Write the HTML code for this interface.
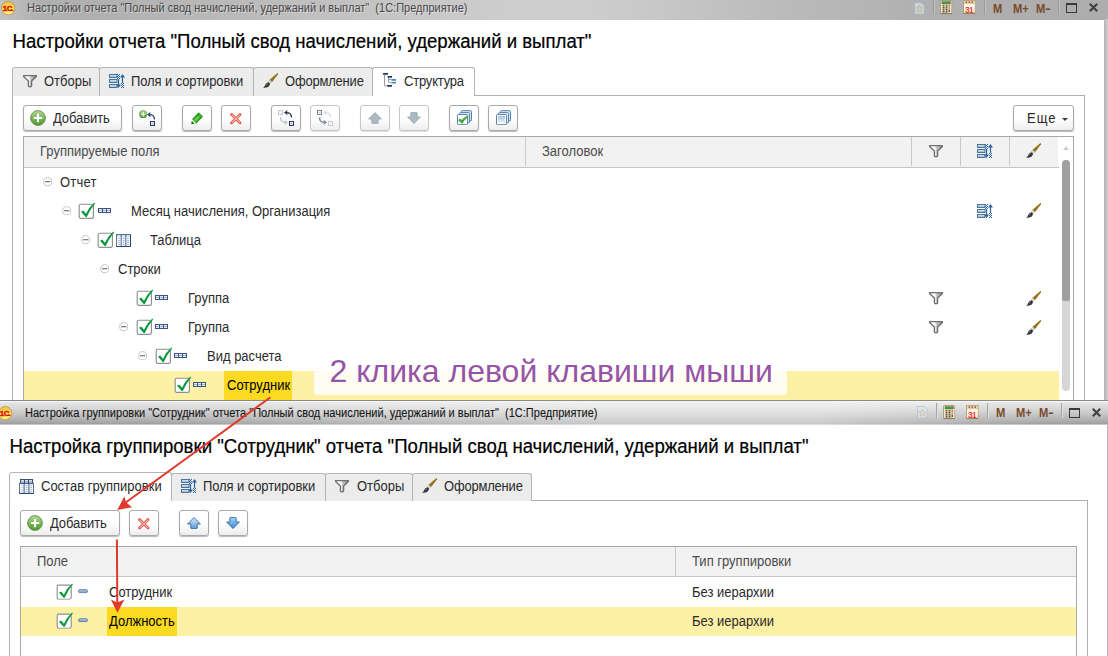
<!DOCTYPE html>
<html><head><meta charset="utf-8">
<style>
html,body{margin:0;padding:0;}
body{width:1108px;height:656px;overflow:hidden;background:#fff;font-family:"Liberation Sans",sans-serif;font-size:13px;color:#2b2b2b;position:relative;}
.a{position:absolute;}
.t{position:absolute;white-space:pre;line-height:1;transform:scaleY(1.075);transform-origin:0 11px;-webkit-text-stroke:0;}
.hd{transform:scaleY(1.06);transform-origin:0 15.7px;-webkit-text-stroke:.2px #000;}
.h{color:#4a4a4a;}
.tb{position:absolute;left:0;width:1108px;}
.btn{position:absolute;box-sizing:border-box;border:1px solid #a9a9a9;border-radius:3px;background:linear-gradient(#fff 0%,#fff 50%,#ededed 100%);box-shadow:0 1px 1px rgba(0,0,0,.28);}
.btn.dis{border-color:#c6c6c6;box-shadow:0 1px 1px rgba(0,0,0,.14);}
.tab{position:absolute;box-sizing:border-box;border:1px solid #b4b4b4;border-bottom:none;border-radius:3px 3px 0 0;background:#ececec;}
.tab.act{background:#fff;}
svg{position:absolute;overflow:visible;}
.mm{position:absolute;white-space:pre;line-height:1;font-weight:bold;font-size:12px;color:#7a4a2b;transform-origin:0 0;transform:scaleX(.93);}
</style></head><body>
<svg width="0" height="0" style="left:-10px;top:-10px;">
<defs>
<linearGradient id="gFun" x1="0" y1="0" x2="1" y2="0"><stop offset="0" stop-color="#fff"/><stop offset=".42" stop-color="#fdfdfd"/><stop offset=".56" stop-color="#c4c4c4"/><stop offset="1" stop-color="#8c8c8c"/></linearGradient>
<linearGradient id="gBar" x1="0" y1="0" x2="0" y2="1"><stop offset="0" stop-color="#e4eef7"/><stop offset="1" stop-color="#8fb0cc"/></linearGradient>
<linearGradient id="gBr" x1="0" y1="0" x2="1" y2="1"><stop offset="0" stop-color="#c89a2a"/><stop offset="1" stop-color="#6b4a0c"/></linearGradient>
<linearGradient id="gGr" x1="0" y1="0" x2="0" y2="1"><stop offset="0" stop-color="#b2d89a"/><stop offset=".45" stop-color="#7fbc5c"/><stop offset="1" stop-color="#4c9a2c"/></linearGradient>
<linearGradient id="gSq" x1="0" y1="0" x2="0" y2="1"><stop offset="0" stop-color="#aac4de"/><stop offset="1" stop-color="#f2f7fb"/></linearGradient>
<linearGradient id="gLogo" x1="0" y1="0" x2="0" y2="1"><stop offset="0" stop-color="#f6c13c"/><stop offset=".55" stop-color="#fde24a"/><stop offset="1" stop-color="#fff68a"/></linearGradient>
<linearGradient id="gDn" x1="0" y1="0" x2="0" y2="1"><stop offset="0" stop-color="#a9d6f7"/><stop offset="1" stop-color="#3586d6"/></linearGradient>
<linearGradient id="gFld" x1="0" y1="0" x2="0" y2="1"><stop offset="0" stop-color="#c4d6e8"/><stop offset="1" stop-color="#7296bb"/></linearGradient>
<linearGradient id="gCalc" x1="0" y1="0" x2="0" y2="1"><stop offset="0" stop-color="#fdf3e0"/><stop offset="1" stop-color="#f6dcae"/></linearGradient>
<linearGradient id="gCal" x1="0" y1="0" x2="0" y2="1"><stop offset="0" stop-color="#ffffff"/><stop offset=".5" stop-color="#fff6ea"/><stop offset="1" stop-color="#fbdcb4"/></linearGradient>
<linearGradient id="gUp" x1="0" y1="0" x2="0" y2="1"><stop offset="0" stop-color="#d9ecfb"/><stop offset="1" stop-color="#5b9bd8"/></linearGradient>

<symbol id="funnel" viewBox="0 0 14 13"><path d="M0.6,0.6 H13.4 V1.6 L8.6,6 V10.8 Q8.6,11.7 7,11.7 Q5.4,11.7 5.4,10.8 V6 L0.6,1.6 Z" fill="url(#gFun)" stroke="#707070" stroke-width="1.35" stroke-linejoin="round"/></symbol>

<symbol id="sort" viewBox="0 0 16 14">
<rect x=".5" y=".5" width="7.5" height="3" fill="url(#gBar)" stroke="#4d7696" stroke-width="1"/>
<rect x=".5" y="5.5" width="7.5" height="3" fill="url(#gBar)" stroke="#4d7696" stroke-width="1"/>
<rect x=".5" y="10.5" width="7.5" height="3" fill="url(#gBar)" stroke="#4d7696" stroke-width="1"/>
<path d="M9.5,5 V12" stroke="#2a64a0" stroke-width="1.2"/><path d="M7,10.4 H12 L9.5,14 Z" fill="#2a64a0"/>
<path d="M8.5,0 V5 M10.5,0 V5" stroke="#2a64a0" stroke-width="1" stroke-dasharray="1 1"/><path d="M9.5,1 V5" stroke="#2a64a0" stroke-width="1" stroke-dasharray="1 1"/>
<path d="M13.5,2 V9" stroke="#2a64a0" stroke-width="1.2"/><path d="M11,3.6 H16 L13.5,0 Z" fill="#2a64a0"/>
<path d="M12.5,9 V14 M14.5,9 V14" stroke="#2a64a0" stroke-width="1" stroke-dasharray="1 1"/><path d="M13.5,10 V14" stroke="#2a64a0" stroke-width="1" stroke-dasharray="1 1"/>
</symbol>

<symbol id="brush" viewBox="0 0 16 16">
<path d="M15.4,0.9 L16.3,1.8 L10.1,10 L7.5,7.7 Z" fill="url(#gBr)"/>
<path d="M7.5,8.2 L9.6,10.1 L8.3,11.5 L6.3,9.8 Z" fill="#dcdcdc" stroke="#8a8a8a" stroke-width=".4"/>
<path d="M6.5,10.3 L8,11.6 Q8,13.6 6.4,14.8 Q4,16 1.1,15.7 Q2.8,14.4 3.2,12.9 Q3.9,10.8 6.5,10.3 Z" fill="#343434"/>
<path d="M4.4,12.2 Q5.2,11.4 6,11.6 Q5,13 4.6,14.2 Z" fill="#8c8c8c"/>
</symbol>

<symbol id="plus" viewBox="0 0 16 16"><circle cx="8" cy="8" r="7.4" fill="url(#gGr)" stroke="#668c58" stroke-width=".9"/><path d="M3.8,8 H12.2 M8,3.8 V12.2" stroke="#fff" stroke-width="2.1"/></symbol>

<symbol id="chk" viewBox="0 0 18 18"><rect x="1.2" y="3.2" width="14.2" height="14.2" rx="1.6" fill="#fff" stroke="#8f8f8f" stroke-width="1.15"/><path d="M3,10.8 L5.2,9.6 L8,12.8 Q11,6.2 16.3,1.6 L17.1,2.4 Q12.2,8.2 8.8,16 L7.7,16 Z" fill="#0a9a3c"/></symbol>

<symbol id="grp" viewBox="0 0 13 5"><rect x="0" y="0" width="13" height="5" fill="#3c5580"/><rect x="1" y="1" width="3" height="3" fill="#e8eef6"/><rect x="5" y="1" width="3" height="3" fill="#e8eef6"/><rect x="9" y="1" width="3" height="3" fill="#e8eef6"/><path d="M1,2.5h3M5,2.5h3M9,2.5h3" stroke="#8aa0c0" stroke-width=".8"/></symbol>

<symbol id="tbl" viewBox="0 0 15 13"><rect x=".5" y=".5" width="14" height="12" fill="#f7fafd" stroke="#5a7196" stroke-width="1"/><rect x="1" y="1" width="13" height="2" fill="#d3e0ef"/><path d="M.5,12.5 H14.5 V1" fill="none" stroke="#2b436e" stroke-width="1"/><path d="M5.2,1 V12 M9.8,1 V12" stroke="#3a5482" stroke-width=".9"/><path d="M2.4,4.5h1.2M2.4,6.5h1.2M2.4,8.5h1.2M2.4,10.5h1.2M6.9,4.5h1.4M6.9,6.5h1.4M6.9,8.5h1.4M6.9,10.5h1.4M11.4,4.5h1.4M11.4,6.5h1.4M11.4,8.5h1.4M11.4,10.5h1.4" stroke="#6a8cc0" stroke-width=".8"/></symbol>

<symbol id="comp" viewBox="0 0 15 15"><rect x=".5" y="4.5" width="14" height="10" fill="#f7fafd" stroke="#5a7196" stroke-width="1"/><path d="M.5,14.5 H14.5" stroke="#2b436e" stroke-width="1.2"/><path d="M5.1,4.5 V14.5 M9.9,4.5 V14.5" stroke="#3a5482" stroke-width="1"/><rect x="1" y="0" width="13" height="4.6" fill="#34507c"/><rect x="2" y="1.1" width="3" height="2.5" fill="#eef3fa"/><rect x="6" y="1.1" width="3" height="2.5" fill="#eef3fa"/><rect x="10" y="1.1" width="3" height="2.5" fill="#eef3fa"/><path d="M2,2.4h3M6,2.4h3M10,2.4h3" stroke="#8aa0c0" stroke-width=".7"/><path d="M2.6,6.5h.9M2.6,8.5h.9M2.6,10.5h.9M2.6,12.5h.9M6.8,6.5h1.5M6.8,8.5h1.5M6.8,10.5h1.5M6.8,12.5h1.5M11.4,6.5h1.5M11.4,8.5h1.5M11.4,10.5h1.5M11.4,12.5h1.5" stroke="#7f98bd" stroke-width=".8"/></symbol>
<symbol id="col" viewBox="0 0 10 10"><circle cx="5" cy="5" r="4.3" fill="#fff" stroke="#bdbdbd" stroke-width=".95"/><path d="M2.2,5 H7.8" stroke="#5a5a5a" stroke-width="1.1"/></symbol>

<symbol id="fld" viewBox="0 0 10 4"><rect x=".5" y=".5" width="9" height="3" rx="1.4" fill="url(#gFld)" stroke="#6486ab" stroke-width="1"/></symbol>

<symbol id="xred" viewBox="0 0 12 12"><path d="M1.6,1.6 L10.4,10.4 M10.4,1.6 L1.6,10.4" stroke="#e0584a" stroke-width="3" stroke-linecap="round"/><path d="M2,2 L10,10 M10,2 L2,10" stroke="#f6b8ae" stroke-width="1.2" stroke-linecap="round"/></symbol>

<symbol id="pencil" viewBox="0 0 13 13"><path d="M8,0.2 L12.5,4.7 L5.4,12.3 L1,7.6 Z" fill="#2f9e1e"/><path d="M8.4,2.4 L10.3,4.3 L4.7,10.2 L2.9,8.3 Z" fill="#66cf50"/><path d="M6.2,2 L10.7,6.5" stroke="#1f7a14" stroke-width=".9"/><path d="M1,7.6 L5.4,12.3 L3.4,12.6 L0.8,9.6 Z" fill="#fff"/><path d="M0.8,9.2 L3.9,12.6 L0.3,12.7 Z" fill="#1a6a10"/></symbol>

<symbol id="sq" viewBox="0 0 5 5"><rect x=".5" y=".5" width="4" height="4" fill="#eef3fa" stroke="#27375f" stroke-width="1"/><path d="M1.6,2.6h1.8" stroke="#7f90b0" stroke-width=".8"/></symbol>
<symbol id="sqf" viewBox="0 0 5 5"><rect x=".5" y=".5" width="4" height="4" fill="#f6f8fb" stroke="#c3cbd8" stroke-width="1"/></symbol>

<symbol id="arrL" viewBox="0 0 8 8"><path d="M7.4,7.6 Q7.6,2.6 2.4,2.6" fill="none" stroke="currentColor" stroke-width="1.3"/><path d="M0,2.6 L3.6,0 L2.9,2.6 L3.6,5.2 Z" fill="currentColor"/></symbol>
<symbol id="arrR" viewBox="0 0 8 8"><path d="M0.6,0.2 Q0.4,5.4 5.4,5.4" fill="none" stroke="currentColor" stroke-width="1.3"/><path d="M8,5.4 L4.4,2.8 L5.1,5.4 L4.4,8 Z" fill="currentColor"/></symbol>

<symbol id="aup" viewBox="0 0 14 12"><path d="M7,0.5 L13.4,7 H10.2 V11 Q10.2,11.6 9.6,11.6 H4.4 Q3.8,11.6 3.8,11 V7 H0.6 Z" style="fill:var(--f,currentColor);stroke:var(--s)" stroke-width=".9" stroke-linejoin="round"/></symbol>
<symbol id="adn" viewBox="0 0 14 12"><path d="M7,11.5 L13.4,5 H10.2 V1 Q10.2,.4 9.6,.4 H4.4 Q3.8,.4 3.8,1 V5 H0.6 Z" style="fill:var(--f,currentColor);stroke:var(--s)" stroke-width=".9" stroke-linejoin="round"/></symbol>

<symbol id="stack" viewBox="0 0 16 15"><rect x="4.5" y=".5" width="10.4" height="10.4" rx="1" fill="#dfeaf5" stroke="#4b7cab"/><rect x="2.5" y="2.5" width="10.4" height="10.4" rx="1" fill="#e8f0f8" stroke="#4b7cab"/><rect x=".5" y="4.5" width="10.4" height="10.4" rx="1" fill="#fff" stroke="#4b7cab"/></symbol>

<symbol id="logo" viewBox="0 0 15 15"><circle cx="7.5" cy="7.5" r="6.9" fill="url(#gLogo)" stroke="#c9935a" stroke-width="1"/><text x="1.7" y="10.4" font-family="Liberation Sans, sans-serif" font-weight="bold" font-size="8.2" fill="#d8151b" stroke="#d8151b" stroke-width=".5" letter-spacing="-.4">1С</text><path d="M8.6,9.8 H13" stroke="#d8151b" stroke-width="1.1"/></symbol>

<symbol id="star" viewBox="0 0 12 14"><path d="M.5,.5 H8 L11.5,4 V13.5 H.5 Z" fill="#dfe8f1" stroke="#9fb4c8" stroke-width="1"/><path d="M6,3.4 L7.1,6.2 L10,6.4 L7.8,8.3 L8.5,11.2 L6,9.6 L3.5,11.2 L4.2,8.3 L2,6.4 L4.9,6.2 Z" fill="#e8dcb8" stroke="#b8a886" stroke-width=".6"/></symbol>

<symbol id="calc" viewBox="0 0 12.4 14.2"><rect x=".5" y=".5" width="11.4" height="13.2" rx=".8" fill="url(#gCalc)" stroke="#a8957c" stroke-width=".9"/><path d="M.6,13.6 H11.8" stroke="#7d7466" stroke-width=".9"/><rect x="2" y="1.7" width="8.4" height="2.3" fill="#4a9c3a" stroke="#3a6e30" stroke-width=".5"/><path d="M2.6,5.9h1.9M5.6,5.9h1.9M2.6,7.9h1.9M5.6,7.9h1.9M2.6,9.9h1.9M5.6,9.9h1.9M2.6,11.9h1.9M5.6,11.9h1.9" stroke="#3a3630" stroke-width="1.1"/><path d="M9.2,7.4v1.2M9.2,9.4v2.6" stroke="#3a3630" stroke-width="1.1"/><path d="M9.2,5.1v1.6" stroke="#e0281c" stroke-width="1.1"/></symbol>

<symbol id="cal" viewBox="0 0 12.8 14.2"><rect x=".5" y=".5" width="11.8" height="13.2" fill="url(#gCal)" stroke="#b09c84" stroke-width=".9"/><path d="M.6,13.6 H12.2" stroke="#857868" stroke-width=".9"/><rect x=".9" y=".9" width="11" height="2.6" fill="#f3d19a"/><path d="M.9,3.7 H11.9" stroke="#d9a865" stroke-width=".6"/><path d="M2.7,2.2h1.3M5.6,2.2h1.3M8.6,2.2h1.3" stroke="#4a3218" stroke-width="1.3"/><text transform="translate(2.3,12.7) scale(.8,1)" font-family="Liberation Sans, sans-serif" font-size="9.6" fill="#e8261a" stroke="#e8261a" stroke-width=".25" letter-spacing="-.3">31</text></symbol>

<symbol id="max" viewBox="0 0 11 10"><rect x=".5" y="1" width="10" height="8.5" fill="none" stroke="#3a3a3a" stroke-width="1"/><rect x="0" y="0" width="11" height="2" fill="#3a3a3a"/></symbol>
<symbol id="cls" viewBox="0 0 9 9"><path d="M.8,.8 L8.2,8.2 M8.2,.8 L.8,8.2" stroke="#404040" stroke-width="2.1"/></symbol>
</defs>
</svg>

<!-- ===== top window ===== -->
<div class="tb" style="top:0;height:19.5px;background:linear-gradient(90deg,rgba(255,255,255,0) 90px,rgba(255,255,255,.38) 500px,rgba(255,255,255,.4) 580px,rgba(255,255,255,.14) 800px,rgba(255,255,255,.03) 930px,rgba(255,255,255,0) 1108px),linear-gradient(90deg,#c2c2c2 0,#b0b0b0 40px,#adadad 100%);"></div>
<div class="a" style="left:1104px;top:19px;width:4px;height:382px;background:linear-gradient(90deg,#b4b4b4,#cfcfcf);"></div>
<svg style="left:1px;top:1px;" width="14.5" height="14.5"><use href="#logo"/></svg>
<div class="t" style="left:27.3px;top:2px;font-size:12px;transform-origin:0 0;transform:scaleX(.916);-webkit-text-stroke:0;color:#474747;text-shadow:1px 1px 0 rgba(255,255,255,.45);">Настройки отчета "Полный свод начислений, удержаний и выплат"  (1С:Предприятие)</div>

<svg style="left:913.8px;top:1.6px;opacity:.62;" width="10.8" height="12.6"><use href="#star"/></svg>
<div class="a" style="left:933px;top:0;width:2px;height:14px;background:linear-gradient(90deg,#9b9b9b 50%,#c2c2c2 50%);"></div>
<svg style="left:940.2px;top:.3px;" width="12.4" height="14.2"><use href="#calc"/></svg>
<svg style="left:963.1px;top:.3px;" width="12.8" height="14.2"><use href="#cal"/></svg>
<div class="a" style="left:984px;top:0;width:2px;height:14px;background:linear-gradient(90deg,#9b9b9b 50%,#c2c2c2 50%);"></div>
<div class="mm" style="left:993px;top:2.5px;">M</div>
<div class="mm" style="left:1013px;top:2.5px;">M+</div>
<div class="mm" style="left:1035.5px;top:2.5px;">M<span style="display:inline-block;transform:scaleX(1.45);transform-origin:0 50%;">-</span></div>
<div class="a" style="left:1058px;top:0;width:2px;height:14px;background:linear-gradient(90deg,#9b9b9b 50%,#c2c2c2 50%);"></div>
<svg style="left:1066px;top:3px;" width="11" height="10"><use href="#max"/></svg>
<svg style="left:1089px;top:3.2px;" width="9" height="9"><use href="#cls"/></svg>

<div class="t hd" style="left:12.5px;top:33px;font-size:18.6px;color:#000;">Настройки отчета "Полный свод начислений, удержаний и выплат"</div>

<!-- panel -->
<div class="a" style="left:12px;top:95px;width:1073px;height:320px;border:1px solid #b0b0b0;border-bottom:none;box-sizing:border-box;"></div>
<!-- tabs -->
<div class="tab" style="left:12px;top:67px;width:88px;height:29px;"></div>
<div class="tab" style="left:99px;top:67px;width:155px;height:29px;"></div>
<div class="tab" style="left:253px;top:67px;width:120px;height:29px;"></div>
<div class="tab act" style="left:372px;top:67px;width:103px;height:29px;"></div>
<svg style="left:23px;top:74.5px;" width="14" height="13"><use href="#funnel"/></svg>
<svg style="left:109px;top:74px;" width="16" height="14"><use href="#sort"/></svg>
<svg style="left:262px;top:72px;" width="16" height="16"><use href="#brush"/></svg>
<svg style="left:383px;top:73px;" width="13" height="14"><path d="M1.5,2 V12.8 H5 M5.5,5 V9.2 H8.5 M5.5,6.4 H8.5" fill="none" stroke="#9a9a9a" stroke-width="1"/><path d="M0,.8 H5 M4.6,3.9 H9 M4.2,12.8 H9" stroke="#1f3d5c" stroke-width="1.7"/><path d="M8.4,6.9 H13 M8.4,9.7 H13" stroke="#3f86c2" stroke-width="1.6"/></svg>
<div class="t" style="left:44px;top:75px;">Отборы</div>
<div class="t" style="left:131px;top:75px;letter-spacing:-.1px;">Поля и сортировки</div>
<div class="t" style="left:285px;top:75px;letter-spacing:-.2px;">Оформление</div>
<div class="t" style="left:404px;top:75px;letter-spacing:-.2px;">Структура</div>

<!-- toolbar -->
<div class="btn" style="left:23px;top:105px;width:99px;height:26px;"></div>
<svg style="left:30px;top:110px;" width="16" height="16"><use href="#plus"/></svg>
<div class="t" style="left:53px;top:112px;letter-spacing:-.1px;">Добавить</div>
<div class="btn" style="left:132px;top:105px;width:30px;height:26px;"></div>
<div class="btn" style="left:182px;top:105px;width:30px;height:26px;"></div>
<div class="btn" style="left:221px;top:105px;width:30px;height:26px;"></div>
<div class="btn" style="left:271px;top:105px;width:30px;height:26px;"></div>
<div class="btn dis" style="left:310px;top:105px;width:30px;height:26px;"></div>
<div class="btn dis" style="left:360px;top:105px;width:30px;height:26px;"></div>
<div class="btn dis" style="left:399px;top:105px;width:30px;height:26px;"></div>
<div class="btn" style="left:449px;top:105px;width:30px;height:26px;"></div>
<div class="btn" style="left:488px;top:105px;width:30px;height:26px;"></div>
<!-- btn2 icon -->
<svg style="left:139px;top:110.2px;" width="8.4" height="8.4"><use href="#plus"/></svg>
<svg style="left:146.9px;top:112px;color:#1f4468;" width="8" height="8"><use href="#arrL"/></svg>
<svg style="left:150px;top:121px;" width="5" height="5"><use href="#sq"/></svg>
<!-- pencil / x -->
<svg style="left:190.5px;top:111.8px;" width="12.5" height="12.5"><use href="#pencil"/></svg>
<svg style="left:229.6px;top:112.6px;" width="11.6" height="11.6"><use href="#xred"/></svg>
<!-- btn5 -->
<svg style="left:278px;top:110.2px;" width="5" height="5"><use href="#sqf"/></svg>
<svg style="left:284px;top:110px;color:#1d3550;" width="8" height="8"><use href="#arrL"/></svg>
<svg style="left:280px;top:117px;color:#b9c6d3;" width="8" height="8"><use href="#arrR"/></svg>
<svg style="left:289px;top:121px;" width="5" height="5"><use href="#sq"/></svg>
<!-- btn6 -->
<svg style="left:317px;top:110.2px;opacity:.6;" width="5" height="5"><use href="#sq"/></svg>
<svg style="left:323px;top:110px;color:#d5dde4;" width="8" height="8"><use href="#arrL"/></svg>
<svg style="left:319px;top:117px;color:#748a9c;" width="8" height="8"><use href="#arrR"/></svg>
<svg style="left:328px;top:121px;" width="5" height="5"><use href="#sqf"/></svg>
<!-- up / down disabled -->
<svg style="left:367.5px;top:111.8px;color:#abb9c3;--s:#9aaab6;" width="14" height="12"><use href="#aup"/></svg>
<svg style="left:406.5px;top:112px;color:#abb9c3;--s:#9aaab6;" width="14" height="12"><use href="#adn"/></svg>
<!-- stacks -->
<svg style="left:456.6px;top:110px;" width="15.6" height="15"><use href="#stack"/></svg>
<svg style="left:458px;top:115.5px;" width="9.5" height="8"><path d="M0.6,4.2 L2.2,2.8 L3.8,4.6 Q6,1.6 8.6,0.2 L9.2,1.2 Q6,4 4,7.6 Z" fill="#3fae2a" stroke="#2d8a1c" stroke-width=".5"/></svg>
<svg style="left:495.8px;top:110px;" width="15.6" height="15"><use href="#stack"/></svg>
<div class="a" style="left:498.3px;top:116.3px;width:6.4px;height:6.4px;background:linear-gradient(#a9c2dc,#eef4fa);"></div>

<div class="btn" style="left:1013px;top:105px;width:61px;height:26px;"></div>
<div class="t" style="left:1027px;top:112px;letter-spacing:1px;">Еще</div>
<div class="a" style="left:1061.5px;top:118px;border:3px solid transparent;border-top:3.2px solid #3c3c3c;border-bottom:none;"></div>

<!-- table -->
<div class="a" style="left:23px;top:136px;width:1051px;height:270px;border:1px solid #a8a8a8;box-sizing:border-box;"></div>
<div class="a" style="left:24px;top:137px;width:1034px;height:30px;background:#f2f2f2;"></div>
<div class="a" style="left:24px;top:166.5px;width:1035px;height:1px;background:#c4c4c4;"></div>
<div class="a" style="left:525px;top:137px;width:1px;height:29px;background:#c9c9c9;"></div>
<div class="a" style="left:911px;top:137px;width:1px;height:29px;background:#c9c9c9;"></div>
<div class="a" style="left:960px;top:137px;width:1px;height:29px;background:#c9c9c9;"></div>
<div class="a" style="left:1009px;top:137px;width:1px;height:29px;background:#c9c9c9;"></div>
<div class="t h" style="left:40px;top:145px;">Группируемые поля</div>
<div class="t h" style="left:542px;top:145px;">Заголовок</div>
<svg style="left:929px;top:145px;" width="14" height="13"><use href="#funnel"/></svg>
<svg style="left:977px;top:144px;" width="16" height="14"><use href="#sort"/></svg>
<svg style="left:1025px;top:142.4px;" width="16" height="16"><use href="#brush"/></svg>

<!-- rows -->
<div class="a" style="left:24px;top:371px;width:1035px;height:32px;background:#fcf1a5;"></div>
<div class="a" style="left:224px;top:371px;width:68px;height:32px;background:#fbda21;"></div>

<svg style="left:43px;top:177px;" width="9.4" height="9.4"><use href="#col"/></svg>
<div class="t" style="left:60px;top:176px;letter-spacing:.2px;">Отчет</div>

<svg style="left:62px;top:206px;" width="9.4" height="9.4"><use href="#col"/></svg>
<svg style="left:78.4px;top:201.4px;" width="18" height="18"><use href="#chk"/></svg>
<svg style="left:98px;top:208px;" width="13" height="5"><use href="#grp"/></svg>
<div class="t" style="left:131px;top:205px;">Месяц начисления, Организация</div>
<svg style="left:977px;top:204px;" width="16" height="14"><use href="#sort"/></svg>
<svg style="left:1025px;top:202.4px;" width="16" height="16"><use href="#brush"/></svg>

<svg style="left:81px;top:235px;" width="9.4" height="9.4"><use href="#col"/></svg>
<svg style="left:97px;top:230.4px;" width="18" height="18"><use href="#chk"/></svg>
<svg style="left:116px;top:234px;" width="15" height="13"><use href="#tbl"/></svg>
<div class="t" style="left:150px;top:234px;">Таблица</div>

<svg style="left:100px;top:264px;" width="9.4" height="9.4"><use href="#col"/></svg>
<div class="t" style="left:118px;top:263px;">Строки</div>

<svg style="left:135.6px;top:288.4px;" width="18" height="18"><use href="#chk"/></svg>
<svg style="left:155px;top:295px;" width="13" height="5"><use href="#grp"/></svg>
<div class="t" style="left:188px;top:292px;">Группа</div>
<svg style="left:929px;top:292px;" width="14" height="13"><use href="#funnel"/></svg>
<svg style="left:1025px;top:289.5px;" width="16" height="16"><use href="#brush"/></svg>

<svg style="left:118.5px;top:322px;" width="9.4" height="9.4"><use href="#col"/></svg>
<svg style="left:135.6px;top:317.4px;" width="18" height="18"><use href="#chk"/></svg>
<svg style="left:155px;top:324px;" width="13" height="5"><use href="#grp"/></svg>
<div class="t" style="left:188px;top:321px;">Группа</div>
<svg style="left:929px;top:321px;" width="14" height="13"><use href="#funnel"/></svg>
<svg style="left:1025px;top:318.5px;" width="16" height="16"><use href="#brush"/></svg>

<svg style="left:137.6px;top:351px;" width="9.4" height="9.4"><use href="#col"/></svg>
<svg style="left:154.8px;top:346.4px;" width="18" height="18"><use href="#chk"/></svg>
<svg style="left:174px;top:353px;" width="13" height="5"><use href="#grp"/></svg>
<div class="t" style="left:207px;top:350px;">Вид расчета</div>

<svg style="left:173.8px;top:375.4px;" width="18" height="18"><use href="#chk"/></svg>
<svg style="left:193px;top:382px;" width="13" height="5"><use href="#grp"/></svg>
<div class="t" style="left:227px;top:379px;color:#000;">Сотрудник</div>

<!-- scrollbar -->
<div class="a" style="left:1063px;top:145.6px;border:3.2px solid transparent;border-bottom:4px solid #cdcdcd;border-top:none;"></div>
<div class="a" style="left:1062.2px;top:160px;width:7.7px;height:231px;background:#d6d6d6;border-radius:4px;"></div>
<div class="a" style="left:1062.2px;top:160px;width:7.7px;height:141px;background:#a0a0a0;border-radius:4px 4px 2px 2px;"></div>

<!-- annotation -->
<div class="a" style="left:314px;top:346px;width:473px;height:49px;background:rgba(255,255,255,.84);border-radius:4px;"></div>
<div class="t" style="left:329.5px;top:355px;font-size:32px;color:#9654a8;transform:none;-webkit-text-stroke:0;">2 клика левой клавиши мыши</div>

<!-- ===== bottom window ===== -->
<div class="a" style="left:0;top:400px;width:1108px;height:256px;background:#fff;"></div>
<div class="a" style="left:1107px;top:423px;width:1px;height:233px;background:#b9b9b9;"></div>
<div class="tb" style="top:400px;height:25px;background:linear-gradient(90deg,rgba(255,255,255,0) 150px,rgba(255,255,255,.42) 600px,rgba(255,255,255,.42) 820px,rgba(255,255,255,0) 1050px) 0 2px/100% 23px no-repeat,linear-gradient(#8a8a8a 0,#8a8a8a 1px,#f4f4f4 1.5px,#e4e4e4 3px,#d9d9d9 8px,#c2c2c2 15px,#a9a9a9 22px,#a0a0a0 23.5px,#d8d8d8 25px);"></div>
<svg style="left:-2.4px;top:405.8px;" width="14.5" height="14.5"><use href="#logo"/></svg>
<div class="t" style="left:25px;top:407px;font-size:12px;transform-origin:0 0;transform:scaleX(.919);-webkit-text-stroke:.1px #161616;color:#161616;">Настройка группировки "Сотрудник" отчета "Полный свод начислений, удержаний и выплат"  (1С:Предприятие)</div>

<svg style="left:916.8px;top:406.4px;opacity:.62;" width="10.8" height="12.6"><use href="#star"/></svg>
<div class="a" style="left:936px;top:403px;width:2px;height:15px;background:linear-gradient(90deg,#a4a4a4 50%,#e2e2e2 50%);"></div>
<svg style="left:943.2px;top:405.4px;" width="12.4" height="14.2"><use href="#calc"/></svg>
<svg style="left:966.1px;top:405.4px;" width="12.8" height="14.2"><use href="#cal"/></svg>
<div class="a" style="left:987px;top:403px;width:2px;height:15px;background:linear-gradient(90deg,#a4a4a4 50%,#e2e2e2 50%);"></div>
<div class="mm" style="left:996px;top:407px;">M</div>
<div class="mm" style="left:1016px;top:407px;">M+</div>
<div class="mm" style="left:1038.5px;top:407px;">M<span style="display:inline-block;transform:scaleX(1.45);transform-origin:0 50%;">-</span></div>
<div class="a" style="left:1061px;top:403px;width:2px;height:15px;background:linear-gradient(90deg,#a4a4a4 50%,#e2e2e2 50%);"></div>
<svg style="left:1069px;top:408px;" width="11" height="10"><use href="#max"/></svg>
<svg style="left:1092px;top:408.2px;" width="9" height="9"><use href="#cls"/></svg>

<div class="t hd" style="left:9.5px;top:438.4px;font-size:18.6px;color:#000;">Настройка группировки "Сотрудник" отчета "Полный свод начислений, удержаний и выплат"</div>

<div class="a" style="left:9px;top:500px;width:1079px;height:170px;border:1px solid #b0b0b0;box-sizing:border-box;"></div>
<div class="tab act" style="left:9px;top:472px;width:163px;height:29px;"></div>
<div class="tab" style="left:171px;top:473px;width:155px;height:28px;"></div>
<div class="tab" style="left:325px;top:473px;width:88px;height:28px;"></div>
<div class="tab" style="left:412px;top:473px;width:120px;height:28px;"></div>
<svg style="left:19px;top:479px;" width="15" height="15"><use href="#comp"/></svg>
<svg style="left:181px;top:479px;" width="16" height="14"><use href="#sort"/></svg>
<svg style="left:335px;top:479.5px;" width="14" height="13"><use href="#funnel"/></svg>
<svg style="left:421px;top:477px;" width="16" height="16"><use href="#brush"/></svg>
<div class="t" style="left:41px;top:480px;">Состав группировки</div>
<div class="t" style="left:203px;top:480px;letter-spacing:-.1px;">Поля и сортировки</div>
<div class="t" style="left:357px;top:480px;">Отборы</div>
<div class="t" style="left:444px;top:480px;letter-spacing:-.2px;">Оформление</div>

<div class="btn" style="left:20px;top:510px;width:100px;height:26px;"></div>
<svg style="left:27px;top:515px;" width="16" height="16"><use href="#plus"/></svg>
<div class="t" style="left:50px;top:517px;letter-spacing:-.1px;">Добавить</div>
<div class="btn" style="left:129px;top:510px;width:30px;height:26px;"></div>
<svg style="left:138px;top:517.6px;" width="11.6" height="11.6"><use href="#xred"/></svg>
<div class="btn" style="left:179px;top:510px;width:30px;height:26px;"></div>
<div class="btn" style="left:218px;top:510px;width:30px;height:26px;"></div>
<svg style="left:187px;top:517px;--f:url(#gUp);--s:#2c689f;" width="14" height="12"><use href="#aup"/></svg>
<svg style="left:226px;top:516.5px;--f:url(#gDn);--s:#2c689f;" width="14" height="12"><use href="#adn"/></svg>

<div class="a" style="left:20px;top:546px;width:1057px;height:120px;border:1px solid #a8a8a8;box-sizing:border-box;"></div>
<div class="a" style="left:21px;top:547px;width:1055px;height:29.5px;background:#f2f2f2;"></div>
<div class="a" style="left:21px;top:576px;width:1055px;height:1px;background:#c4c4c4;"></div>
<div class="a" style="left:675px;top:547px;width:1px;height:29px;background:#c9c9c9;"></div>
<div class="t h" style="left:37px;top:555px;">Поле</div>
<div class="t h" style="left:692px;top:555px;">Тип группировки</div>
<div class="a" style="left:21px;top:606.5px;width:1055px;height:29.5px;background:#fcf1a5;"></div>
<div class="a" style="left:107px;top:606.5px;width:70px;height:29.5px;background:#fbda21;"></div>
<svg style="left:55.9px;top:582px;" width="17.8" height="17.8"><use href="#chk"/></svg>
<svg style="left:78px;top:589px;" width="10" height="4.4"><use href="#fld"/></svg>
<div class="t" style="left:109px;top:586px;">Сотрудник</div>
<div class="t" style="left:692px;top:586px;">Без иерархии</div>
<svg style="left:55.9px;top:611px;" width="17.8" height="17.8"><use href="#chk"/></svg>
<svg style="left:78px;top:618px;" width="10" height="4.4"><use href="#fld"/></svg>
<div class="t" style="left:109px;top:615px;color:#000;">Должность</div>
<div class="t" style="left:692px;top:615px;">Без иерархии</div>

<!-- red arrows -->
<svg style="left:0;top:0;" width="1108" height="656">
<path d="M270.5,397.2 L124,503.8" stroke="#e03a2e" stroke-width="2" fill="none"/>
<path d="M117.2,510 L124.4,496.2 L125.9,502.3 L132.1,507.2 Z" fill="#e03a2e"/>
<path d="M116.9,539.4 L117.3,603" stroke="#e03a2e" stroke-width="2" fill="none"/>
<path d="M117.4,612.8 L110.8,599.4 L117.2,602.4 L124.4,599.4 Z" fill="#e03a2e"/>
</svg>

</body></html>
